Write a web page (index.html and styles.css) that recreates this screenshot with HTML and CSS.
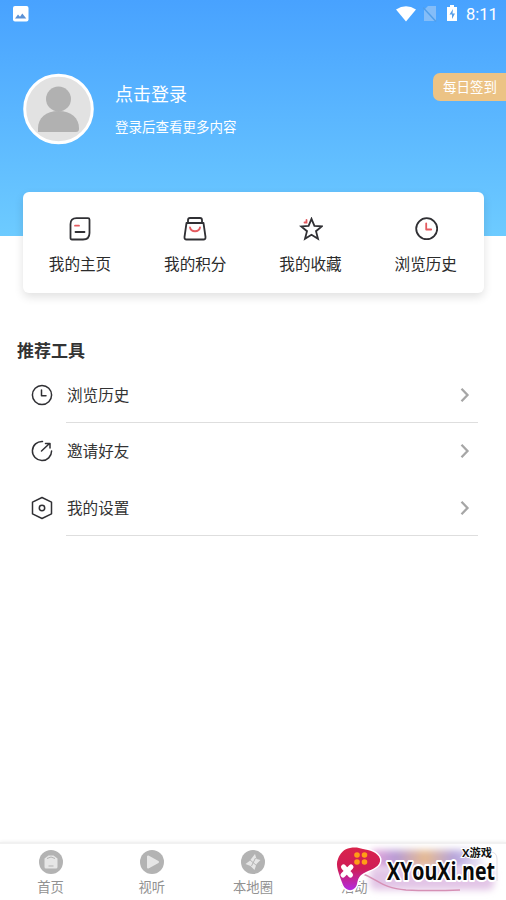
FILE: index.html
```html
<!DOCTYPE html>
<html lang="zh-CN">
<head>
<meta charset="utf-8">
<title>我的</title>
<link rel="stylesheet" href="styles.css">
</head>
<body>
<div class="app">
  <header class="hero">
    <div class="status">
      <svg class="status-photo" width="16" height="16" viewBox="0 0 16 16"><rect width="15.5" height="15.5" rx="2" fill="#fff"/><path d="M2 12.500l3-4 2 2.200 2.300-3.200 4 5z" fill="#5c92d6"/></svg>
      <svg class="status-wifi" width="20" height="16" viewBox="0 0 20 16"><path d="M0 3.500Q10-3 20 3.500L10 15.500z" fill="#fff"/></svg>
      <svg class="status-sim" width="14" height="16" viewBox="0 0 14 16"><path d="M5 0h8v15H1V4z" fill="#84bdf8"/><path d="M0 1.500l13 14" stroke="#4f9eea" stroke-width="1.500"/></svg>
      <svg class="status-battery" width="10" height="17" viewBox="0 0 10 17"><path d="M3 0h4v2h3v14H0V2h3z" fill="#fff"/><path d="M6 4L2.500 9.500H5V14l3-5.500H5.500z" fill="#579ee8"/></svg>
      <span class="time">8:11</span>
    </div>
    <div class="profile">
      <svg class="avatar" width="72" height="72" viewBox="0 0 72 72"><circle cx="36.500" cy="36" r="33.800" fill="#e2e2e2" stroke="#fff" stroke-width="3"/><circle cx="36.500" cy="26" r="12.500" fill="#b1b1b1"/><path d="M16 59v-4c0-10 8-17 20.500-17s20.500 7 20.500 17v1q0 3-3 3z" fill="#b1b1b1"/></svg>
      <div class="login">
        <div class="login-title">点击登录</div>
        <div class="login-sub">登录后查看更多内容</div>
      </div>
      <div class="sign">每日签到</div>
    </div>
  </header>

  <section class="card">
    <div class="tile">
      <svg width="24" height="24" viewBox="0 0 24 24" class="line"><path d="M8.500 1.200h11.500q1.500 0 1.500 1.500V16q0 6.500-6.500 6.500H4q-1.500 0-1.500-1.500V7.200q0-6 6-6z"/><path d="M7.500 15h9"/><path class="red" d="M7 8.700h4"/></svg>
      <span>我的主页</span>
    </div>
    <div class="tile">
      <svg width="24" height="24" viewBox="0 0 24 24" class="line"><path d="M3.500 6h17l2 14q.2 2.500-2 2.500h-17q-2.200 0-2-2.500zM5 6V3q0-2 2-2h10q2 0 2 2v3"/><path class="red" d="M7 10.500c1 5 9 5 10 0"/></svg>
      <span>我的积分</span>
    </div>
    <div class="tile">
      <svg width="24" height="24" viewBox="0 0 24 24" class="line star"><path d="M12.500 1.800l2.900 7.100 7.400.5-5.800 4.800 2 7.600-6.500-4.100-6.500 4.100 2-7.600-5.800-4.800 7.400-.5z"/><path class="red" d="M5.500 5.500h2V3"/></svg>
      <span>我的收藏</span>
    </div>
    <div class="tile">
      <svg width="24" height="24" viewBox="0 0 24 24" class="line"><circle cx="12.700" cy="11.700" r="10.500"/><path class="red" d="M12.200 6.500v6h5"/></svg>
      <span>浏览历史</span>
    </div>
  </section>

  <main class="tools">
    <h2>推荐工具</h2>
    <div class="row">
      <svg width="22" height="24" viewBox="0 0 22 24" class="line thin"><circle cx="11" cy="12" r="9.600"/><path d="M10.500 7v5.700h4.500"/></svg>
      <div class="row-body ruled"><span>浏览历史</span><svg width="10" height="16" viewBox="0 0 10 16" class="chevron"><path d="M1.500 1.800l6 6.200-6 6.200"/></svg></div>
    </div>
    <div class="row">
      <svg width="22" height="24" viewBox="0 0 22 24" class="line thin"><path d="M11.500 2.400A9.600 9.600 0 1 0 20.600 12M10.500 12l8-7.500M14.500 4.500h4.500V9"/></svg>
      <div class="row-body"><span>邀请好友</span><svg width="10" height="16" viewBox="0 0 10 16" class="chevron"><path d="M1.500 1.800l6 6.200-6 6.200"/></svg></div>
    </div>
    <div class="row">
      <svg width="22" height="24" viewBox="0 0 22 24" class="line thin"><path d="M11 1.500l9.500 4.700v11.600L11 22.500l-9.500-4.700V6.200z"/><circle cx="11" cy="12" r="2.700"/></svg>
      <div class="row-body ruled"><span>我的设置</span><svg width="10" height="16" viewBox="0 0 10 16" class="chevron"><path d="M1.500 1.800l6 6.200-6 6.200"/></svg></div>
    </div>
  </main>

  <nav class="tabs">
    <div class="tab">
      <svg width="24" height="24" viewBox="0 0 24 24"><circle cx="12" cy="12" r="12" fill="#b3b3b3"/><path d="M5.500 8.500L9.500 5.500h5l4 3V17q0 1.500-1.500 1.500H7q-1.500 0-1.500-1.500z" fill="#e6e6e6"/><path d="M8 8.500q4-3 8 0M9.500 16h5" fill="none" stroke="#b3b3b3"/></svg>
      <span>首页</span>
    </div>
    <div class="tab">
      <svg width="24" height="24" viewBox="0 0 24 24"><circle cx="12" cy="12" r="12" fill="#b3b3b3"/><path d="M8 6.500v11l10-5.500z" fill="#e6e6e6" stroke="#e6e6e6" stroke-width="2" stroke-linejoin="round"/></svg>
      <span>视听</span>
    </div>
    <div class="tab">
      <svg width="24" height="24" viewBox="0 0 24 24"><circle cx="12" cy="12" r="12" fill="#b3b3b3"/><path d="M14 4l1.500 5 4 1-4 4-2 6-4-4-5-2 4-3z" fill="#e6e6e6"/><path d="M8 9l8 7M14.500 8l-4 8" stroke="#b3b3b3"/></svg>
      <span>本地圈</span>
    </div>
    <div class="tab"><i class="tab-gap"></i><span>活动</span></div>
    <div class="tab"></div>
  </nav>

  <svg class="mark" width="186" height="60" viewBox="320 840 186 60">
    <defs>
      <linearGradient id="pad" x1="0" y1="0" x2="0" y2="1"><stop offset="0" stop-color="#d9234b"/><stop offset=".5" stop-color="#cf1c57"/><stop offset="1" stop-color="#b32be0"/></linearGradient>
      <linearGradient id="haze" x1="0" y1="0" x2="1" y2="0"><stop offset="0" stop-color="#e7a5dc"/><stop offset=".22" stop-color="#b69bd4"/><stop offset=".48" stop-color="#e6bb91"/><stop offset=".75" stop-color="#b4a2dc"/><stop offset="1" stop-color="#efebf7"/></linearGradient>
      <filter id="soft" x="-20%" y="-60%" width="140%" height="220%"><feGaussianBlur stdDeviation="3.500"/></filter>
    </defs>
    <rect x="372" y="850" width="110" height="18" fill="url(#haze)" filter="url(#soft)"/>
    <rect x="370" y="868" width="124" height="22" rx="6" fill="#e2c5e6" filter="url(#soft)"/>
    <path d="M488 852h2q7 0 7 7v22" fill="none" stroke="#e2dfe6"/>
    <path d="M361 873c18 7 21 15 45 17q24 1 54 0" fill="none" stroke="#d690b5" stroke-width="1.500"/>
    <path d="M350 848c6-1 9 0 13 1 6 1 15 3 17 10 1 7-7 10-14 13-7 3-8 7-9 12-2 8-11 8-14 1-4-11-8-20-5-26 2-6 6-10 12-11z" fill="url(#pad)" stroke="#fff" stroke-width="3" paint-order="stroke"/>
    <g fill="#ff9d16"><circle cx="357" cy="855" r="2.800"/><circle cx="364.500" cy="855" r="2.800"/><circle cx="357" cy="862" r="2.800"/><circle cx="364.500" cy="862" r="2.800"/></g>
    <path d="M343.500 867l7 8M351 867l-8 8" stroke="#fff" stroke-width="5" stroke-linecap="round"/>
    <text class="mark-name" x="387" y="880" textLength="108" lengthAdjust="spacingAndGlyphs">XYouXi.net</text>
    <text class="mark-tag" x="462" y="856.500" textLength="30" lengthAdjust="spacingAndGlyphs">X游戏</text>
  </svg>
</div>
</body>
</html>
```
FILE: styles.css
```css
* { box-sizing: border-box; }
body {
  margin: 0;
  background: #fff;
  color: #333;
  font-family: Roboto, "Noto Sans CJK SC", sans-serif;
}
svg { display: block; flex: none; }
.app {
  position: relative;
  display: flex;
  flex-direction: column;
  width: 506px;
  height: 900px;
  overflow: hidden;
}
.hero {
  height: 236px;
  flex: none;
  background: linear-gradient(#48a2ff, #6dcbff);
  color: #fff;
}
.status {
  display: flex;
  align-items: center;
  height: 28px;
  padding: 0 9px 0 13px;
}
.status-wifi { margin-left: auto; }
.status-sim { margin-left: 7px; }
.status-battery { margin: -1px 9px 0 10px; }
.time { font-size: 16.5px; width: 31px; white-space: nowrap; }
.profile {
  display: flex;
  align-items: flex-start;
  padding: 45px 0 0 22px;
}
.login { margin: 8px 0 0 21px; }
.login-title { font-size: 18px; line-height: 28px; }
.login-sub { margin-top: 8px; font-size: 13.5px; line-height: 20px; }
.sign {
  width: 73px;
  height: 28px;
  margin-left: auto;
  padding-left: 10px;
  border-radius: 7px 0 0 7px;
  background: #ecc385;
  font-size: 13.5px;
  line-height: 28px;
}
.card {
  display: flex;
  flex: none;
  height: 101px;
  margin: -44px 22px 0 23px;
  border-radius: 6px;
  background: #fff;
  box-shadow: 0 4px 10px rgba(0, 0, 0, .12);
}
.tile {
  display: flex;
  flex: 1;
  flex-direction: column;
  align-items: center;
  padding-top: 25px;
  font-size: 15.6px;
  line-height: 24px;
  color: #2b2b2b;
}
.tile svg, .tile span { margin-right: 1.2px; }
.tile span { margin-top: 12px; }
.line {
  fill: none;
  stroke: #303034;
  stroke-width: 1.8;
  stroke-linecap: round;
  stroke-linejoin: round;
}
.star { stroke-linejoin: miter; }
.thin { stroke-width: 1.5; }
.red { stroke: #e45b60; }
.tools { flex: 1; padding-top: 44.5px; }
.tools h2 {
  margin: 0 0 2.5px 17px;
  font-size: 17px;
  line-height: 26px;
  font-weight: 700;
}
.row {
  display: flex;
  height: 56.5px;
  padding: 0 28px 0 30.5px;
  gap: 13.5px;
}
.row > svg { margin-top: 16.5px; }
.row-body {
  display: flex;
  flex: 1;
  justify-content: space-between;
  height: 57px;
  padding: 17px 8px 0 1px;
  font-size: 15.6px;
  line-height: 24px;
}
.row-body span { padding-top: .6px; }
.ruled { border-bottom: 1px solid #dedede; }
.chevron {
  margin-top: 3.5px;
  fill: none;
  stroke: #a6a6a6;
  stroke-width: 2.3;
}
.tabs {
  display: flex;
  height: 58px;
  flex: none;
  border-top: 2px solid #f1f1f1;
  box-shadow: 0 -1px 3px #f3f3f3;
}
.tab {
  display: flex;
  flex: 1;
  flex-direction: column;
  align-items: center;
  padding-top: 6px;
  color: #929292;
  font-size: 13.3px;
  line-height: 20px;
}
.tab span { margin-top: 4px; }
.tab-gap { height: 24px; }
.mark { position: absolute; right: 0; bottom: 0; }
.mark-name {
  font: 700 25px "Open Sans", sans-serif;
  fill: #090909;
  stroke: #fff;
  stroke-width: 4px;
  stroke-linejoin: round;
  paint-order: stroke;
}
.mark-tag {
  font: 700 11px "Open Sans", "Noto Sans CJK SC", sans-serif;
  fill: #111;
  stroke: #fff;
  stroke-width: 2px;
  paint-order: stroke;
}
```
